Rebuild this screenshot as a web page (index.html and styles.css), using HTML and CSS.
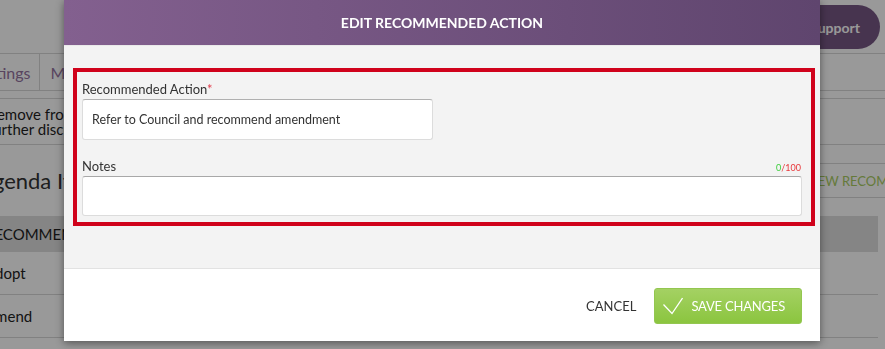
FILE: index.html
```html
<!DOCTYPE html>
<html lang="en">
<head>
    <meta charset="UTF-8">
    <meta name="viewport" content="width=device-width, initial-scale=1.0">
    <title>Edit Recommended Action</title>
    <link rel="stylesheet" href="styles.css">
</head>
<body>
    <div class="page">
        <div class="topbar">
            <button class="support-btn">Support</button>
        </div>
        <div class="content">
            <div class="tabs">
                <span class="tab">Meetings</span>
                <span class="tab">Meeting Items</span>
            </div>
            <div class="notice">Remove from agenda<br>further discussion</div>
            <div class="section-head">
                <h2>Agenda Items</h2>
                <button class="btn-new">NEW RECOMMENDATION</button>
            </div>
            <table class="items">
                <thead>
                    <tr><th>RECOMMENDATION</th></tr>
                </thead>
                <tbody>
                    <tr><td>Adopt</td></tr>
                    <tr><td>Amend</td></tr>
                    <tr><td>Receive</td></tr>
                </tbody>
            </table>
        </div>
    </div>

    <div class="backdrop"></div>

    <div class="modal">
        <div class="modal-header">Edit Recommended Action</div>
        <div class="modal-body">
            <div class="form-box">
                <div class="field">
                    <label class="field-label" for="action">Recommended Action<span class="req">*</span></label>
                    <input class="text-input" type="text" id="action" value="Refer to Council and recommend amendment">
                </div>
                <div class="field notes-field">
                    <div class="label-row">
                        <label class="field-label" for="notes">Notes</label>
                        <span class="counter"><span class="used">0</span>/100</span>
                    </div>
                    <textarea class="notes" id="notes"></textarea>
                </div>
            </div>
        </div>
        <div class="modal-footer">
            <button class="btn-cancel">Cancel</button>
            <button class="btn-save">
                <svg width="20" height="18" viewBox="0 0 20 18"><path d="M0.5 7.5 L9 16.5 L19.5 1" fill="none" stroke="#fff" stroke-width="1.3"/></svg>
                Save Changes
            </button>
        </div>
    </div>
</body>
</html>
```

FILE: styles.css
```css
body {
    margin: 0;
    font-family: 'Lato', 'Liberation Sans', sans-serif;
    color: #333;
    background-color: #fff;
}
.page {
    width: 885px;
    height: 349px;
    overflow: hidden;
    background-color: #fff;
}
.topbar {
    height: 53px;
    border-bottom: 1px solid #d8d8d8;
    display: flex;
    justify-content: flex-end;
    align-items: flex-start;
    padding-right: 5px;
}
.support-btn {
    margin-top: 5px;
    height: 44px;
    padding: 0 20px 0 28px;
    border: none;
    border-radius: 22px;
    background-color: #775884;
    color: #fff;
    font-family: inherit;
    font-size: 14px;
    font-weight: 700;
}
.content {
    margin-left: -8px;
}
.tabs {
    display: flex;
    height: 36px;
    margin-left: -37px;
    border-bottom: 1px solid #d8d8d8;
}
.tab {
    display: flex;
    align-items: center;
    padding: 0 9px 0 10px;
    border-right: 1px solid #d8d8d8;
    font-size: 16px;
    color: #94739f;
}
.notice {
    margin-top: 7px;
    margin-left: -4px;
    padding: 8px 0 7px;
    border-top: 1px solid #d8d8d8;
    border-bottom: 1px solid #d8d8d8;
    font-size: 15px;
    line-height: 15px;
    color: #1e1e1e;
}
.section-head {
    height: 71px;
    display: flex;
    justify-content: space-between;
    align-items: center;
}
.section-head h2 {
    margin: 0 0 0 -14px;
    font-size: 22px;
    line-height: 24px;
    font-weight: 400;
    color: #333;
}
.btn-new {
    height: 35px;
    margin-right: -95px;
    padding: 0 12px;
    border: 1px solid #d8d8d8;
    background-color: #fff;
    color: #a8cc62;
    font-family: inherit;
    font-size: 13px;
}
.items {
    width: 100%;
    margin-left: -7px;
    border-collapse: collapse;
}
.items th {
    height: 36px;
    padding: 0;
    text-align: left;
    font-weight: 400;
    font-size: 15px;
    background-color: #dedede;
    color: #222;
}
.items td {
    height: 42px;
    padding: 0;
    border-bottom: 1px solid #d8d8d8;
    font-size: 15px;
    color: #222;
}
.backdrop {
    position: fixed;
    inset: 0;
    background-color: rgba(0, 0, 0, 0.4);
}
.modal {
    position: absolute;
    top: 0;
    left: 64px;
    width: 756px;
    background-color: #fff;
    box-shadow: 0 2px 8px rgba(0, 0, 0, 0.45);
}
.modal-header {
    height: 45px;
    line-height: 45px;
    text-align: center;
    text-transform: uppercase;
    font-size: 14px;
    font-weight: 700;
    color: #fff;
    background: linear-gradient(to right, #83608f, #5f456e);
}
.modal-body {
    height: 223px;
    box-sizing: border-box;
    padding: 22px 5px 0 9px;
    background-color: #f3f3f3;
    border-top: 1px solid #e9e9e9;
}
.form-box {
    border: 4px solid #d0021b;
    padding: 9px 9px 6px 5px;
}
.field-label {
    display: block;
    font-size: 13px;
    line-height: 16px;
    color: #333;
}
.req {
    color: #e2404f;
}
.text-input {
    display: block;
    margin-top: 2px;
    width: 351px;
    height: 41px;
    box-sizing: border-box;
    padding: 0 9px;
    border: 1px solid #dcdcdc;
    border-top-color: #b0b0b0;
    border-radius: 3px;
    background-color: #fff;
    font-family: inherit;
    font-size: 12.5px;
    color: #333;
}
.notes-field {
    margin-top: 18px;
}
.label-row {
    display: flex;
    justify-content: space-between;
    align-items: flex-end;
}
.counter {
    font-size: 9px;
    line-height: 12px;
    color: #e8383b;
    padding-right: 1px;
}
.counter .used {
    color: #3ccd3c;
}
.notes {
    display: block;
    margin-top: 2px;
    width: 100%;
    height: 40px;
    box-sizing: border-box;
    border: 1px solid #dcdcdc;
    border-top-color: #a8a8a8;
    border-radius: 3px;
    background-color: #fff;
    resize: none;
    font-family: inherit;
}
.modal-footer {
    height: 73px;
    box-sizing: border-box;
    border-top: 1px solid #e2e2e2;
    padding: 19px 18px 0 0;
    display: flex;
    justify-content: flex-end;
    align-items: flex-start;
    gap: 18px;
}
.btn-cancel {
    height: 36px;
    padding: 0;
    border: none;
    background: none;
    text-transform: uppercase;
    font-family: inherit;
    font-size: 13px;
    color: #333;
}
.btn-save {
    height: 36px;
    display: flex;
    align-items: center;
    gap: 8px;
    padding: 0 16px 0 8px;
    border: 1px solid #93c650;
    border-radius: 3px;
    background: linear-gradient(to bottom, #a4d163, #8bc53f);
    color: #fff;
    text-transform: uppercase;
    font-family: inherit;
    font-size: 13px;
    letter-spacing: -0.2px;
}
```
